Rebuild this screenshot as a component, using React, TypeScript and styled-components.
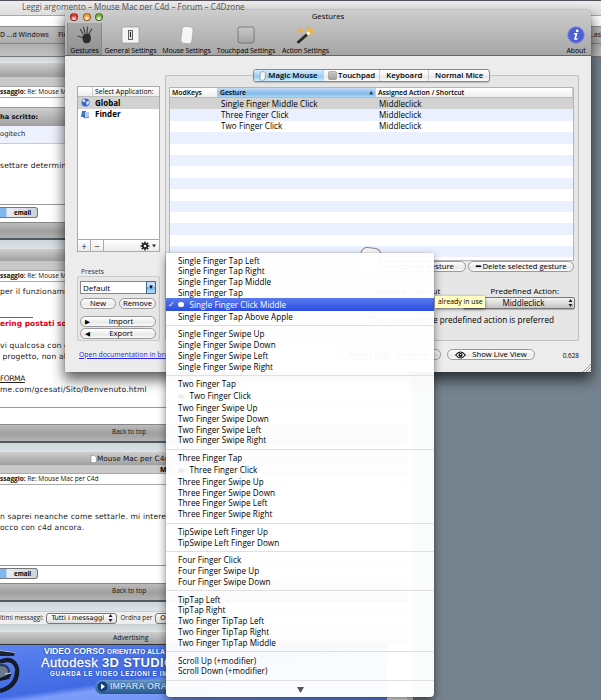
import React from "react";
import styled, { createGlobalStyle, css } from "styled-components";

const Global = createGlobalStyle`
  html, body { margin: 0; padding: 0; overflow: hidden; }
  * { box-sizing: border-box; }
  body { font-family: "Open Sans", "Noto Sans", sans-serif; color: #000; }
`;

const verdana = css`font-family: "DejaVu Sans", sans-serif;`;

const Desktop = styled.div`
  position: relative; width: 601px; height: 700px; overflow: hidden; background: #75838e;
  white-space: nowrap; font-size: 8px; line-height: 1;
`;

/* ---------- browser behind ---------- */
const Browser = styled.div`display: flex; flex-direction: column; width: 601px;`;
const BrowserTitle = styled.div`
  height: 16px; padding: 2px 0 0 22px; border-top: 1px solid #555059; border-bottom: 1px solid #a8a8a8;
  background: linear-gradient(#ededed, #dedede); color: #555; font-size: 8.15px;
`;
const AddressBar = styled.div`height: 11px; background: #fff; border-bottom: 1px solid #8b8b8b;`;
const Bookmarks = styled.div`
  display: flex; align-items: center; height: 17px; border-bottom: 1px solid #858585;
  background: linear-gradient(#bdbdbd, #adadad); color: #333; font-size: 6.9px; font-weight: 600;
  span:nth-child(2) { margin-left: 9px; }
  span:last-child { margin-left: auto; }
`;
const TabStrip = styled.div`height: 13px; background: linear-gradient(#b0b0b0, #c2c2c2); border-bottom: 1px solid #777;`;
const Page = styled.div`
  display: flex; flex-direction: column; width: 413px; background: #fff;
  border-right: 6px solid #e2e2e2;
`;
const Band = styled.div<{ $h: number }>`height: ${p => p.$h}px; background: linear-gradient(#ccd5da, #dde3e6);`;
const Bar = styled.div<{ $h: number; $pad?: number; $bold?: boolean }>`
  display: flex; align-items: center; height: ${p => p.$h}px; padding-left: ${p => p.$pad ?? 0}px;
  background: linear-gradient(#cecece, #a0a0a0); color: #111; font-size: 6.8px;
  ${p => p.$bold && css`${verdana} font-weight: 700; font-size: 6.6px;`}
`;
const TopicBar = styled(Bar)`
  ${verdana} font-size: 7.3px;
`;
const TopBar = styled(Bar)`
  font-size: 6.5px; padding: 0 0 1px 112px; background: linear-gradient(#bbb, #a0a0a0 55%, #b2b2b2);
  border-top: 1px solid #888; border-bottom: 2px solid #51595e;
`;
const Thin = styled.div<{ $h: number }>`
  height: ${p => p.$h}px; background: #c9c9c9; border-bottom: 1px solid #aaa; padding: 1px 0 0 160px;
  font-size: 7px; font-weight: 700;
`;
const Subject = styled.div`
  height: 11px; border-bottom: 1px solid #aaa; font-size: 6.5px; padding-top: 2px; color: #111;
`;
const Quote = styled.div`height: 18px; padding-top: 5px; background: #eef2ff; border-bottom: 1px solid #c5cbd9; ${verdana} font-size: 6.8px; color: #222;`;
const Post = styled.div<{ $h: number; $top: number }>`
  height: ${p => p.$h}px; padding-top: ${p => p.$top}px; border-bottom: 1px solid #999;
  ${verdana} font-size: 7.6px; line-height: 10.9px; color: #222; letter-spacing: 0.17px;
`;
const Warning = styled.div`margin: 0 0 11px; color: #e00016; font-weight: 700; font-size: 7.5px; letter-spacing: 0;`;
const Rule = styled.div`width: 33px; border-top: 1px solid #666; margin: 19px 0 1px;`;
const Under = styled.div`margin-top: 11px; text-decoration: underline; letter-spacing: -0.5px;`;
const MailRow = styled.div<{ $h: number }>`display: flex; align-items: flex-start; height: ${p => p.$h}px; padding-top: 2px; background: #fff;`;
const MailButton = styled.div`
  display: flex; align-items: center; width: 38px; height: 11px; padding-left: 14px; border: 1px solid #777; border-left: 0;
  border-radius: 0 3px 3px 0; background: linear-gradient(90deg, #80b8ee 0 6px, #e7edf2 7px, #ccd3d9);
  font: 700 6.2px "Open Sans", sans-serif;
`;
const Filters = styled.div`
  display: flex; align-items: center; height: 14px; background: #eee; border-block: 1px solid #ccc; font-size: 6.3px; color: #222;
`;
const FormSelect = styled.span`
  display: flex; align-items: center; justify-content: space-between; flex: none; width: 71px; height: 11px; margin: 0 3px; padding: 0 3px 0 4px;
  border: 1px solid #777; border-radius: 3px; background: linear-gradient(#fff, #ddd); ${verdana} font-size: 6.7px; color: #000;
`;
const Banner = styled.div`
  display: flex; width: 387px; height: 56px; background: linear-gradient(172deg, #5b83f0, #426ae4 48%, #7d9dfa 54%, #6389f6);
  border-top: 1px solid #333;
  > svg { flex: none; }
`;
const BannerText = styled.div`
  display: flex; flex-direction: column; color: #fff; font-family: "Liberation Sans", sans-serif; font-weight: 700;
  text-shadow: 0 0 2px #16347c;
`;
const B1 = styled.div`margin: 2px 0 0 3px; font-size: 8.6px; small { font-size: 6.4px; letter-spacing: .2px; }`;
const B2 = styled.div`font-size: 13px; line-height: 13px; letter-spacing: .35px; span { font-weight: 400; -webkit-text-stroke: .3px #fff; }`;
const B3 = styled.div`margin: 2px 0 0 9px; font-size: 6.3px; letter-spacing: 0.65px;`;
const B4 = styled.div`
  display: flex; align-items: center; gap: 2px; width: 110px; height: 14px; margin: 3px 0 0 54px; padding-left: 2px; border-radius: 7px;
  background: linear-gradient(#6b9bc9, #285889); font-size: 9px; color: #bcd9f5;
`;

/* ---------- preferences window ---------- */
const Win = styled.div`
  position: absolute; left: 65px; top: 10px; width: 526px; height: 362px; border-radius: 4px 4px 0 0;
  background: #ececec; box-shadow: 0 7px 13px 1px rgba(0,0,0,.62), 0 0 1px rgba(0,0,0,.6);
`;
const Head = styled.div`
  height: 46px; border-radius: 4px 4px 0 0; border-bottom: 1px solid #666; background: linear-gradient(#cdcdcd, #a6a6a6);
`;
const TitleRow = styled.div`display: grid; grid-template-columns: 60px 1fr 60px; height: 13px; align-items: center; text-align: center; font-size: 7.8px;`;
const Lights = styled.div`display: flex; gap: 4.6px; padding-left: 5px;`;
const Light = styled.i<{ $c: string }>`
  width: 8px; height: 8px; border-radius: 50%; border: 1px solid rgba(60,20,20,.55);
  background: radial-gradient(circle at 50% 85%, #fff, ${p => p.$c} 60%);
`;
const Tools = styled.div`display: flex; height: 32px; padding: 0 4px 0 2px;`;
const Tool = styled.div<{ $w: number; $on?: boolean }>`
  display: flex; flex-direction: column; align-items: center; justify-content: space-between; width: ${p => p.$w}px; padding: 3px 0 1.5px;
  font-size: 7px; letter-spacing: -0.1px;
  ${p => p.$on && css`background: rgba(0,0,0,.13); border-inline: 1px solid #888;`}
  &:last-child { margin-left: auto; }
  svg { display: block; }
`;
const Body = styled.div`display: flex; align-items: flex-start; height: 285px; gap: 5px; padding: 19px 12px 0;`;
const Side = styled.div`display: flex; flex-direction: column; width: 83px; padding-top: 11px;`;
const AppList = styled.div`display: flex; flex-direction: column; height: 166px; border: 1px solid #aaa; background: #fff;`;
const ListHead = styled.div`
  display: flex; height: 10px; border-bottom: 1px solid #bbb; font-size: 6.9px; line-height: 9px; background: linear-gradient(#fff,#eee);
  span { margin-left: 14px; padding-left: 2px; border-left: 1px solid #ccc; }
`;
const AppRow = styled.div<{ $on?: boolean }>`
  display: flex; align-items: center; gap: 5px; height: 11.6px; padding-left: 3px; font-size: 8px; font-weight: 700;
  background: ${p => (p.$on ? "#d2d2d2" : "#fff")};
`;
const ListFoot = styled.div`
  display: flex; margin-top: auto; height: 12px; border-top: 1px solid #aaa; background: linear-gradient(#fff, #ececec);
  span { display: flex; align-items: center; justify-content: center; width: 13px; border-right: 1px solid #aaa; font-size: 10px; color: #333; }
  svg { margin: 1px 2px 0 auto; }
`;
const Caption = styled.div`margin: 16px 0 0 4px; height: 7px; font-size: 6.7px; line-height: 7px; color: #333;`;
const Box = styled.div`
  display: flex; flex-wrap: wrap; gap: 0 3px; align-content: flex-start; margin-top: 1px; height: 65px; padding: 4px 3px 0 2px; border: 1px solid #cacaca; border-radius: 2px; background: #e6e6e6;
`;
const Combo = styled.div`
  display: flex; justify-content: space-between; width: 76px; height: 13px; border: 1px solid #888; background: #fff; padding-left: 2px; font-size: 8px; line-height: 12px;
  i { width: 10px; margin: -1px; border: 1px solid #3d6792; border-radius: 0 2px 2px 0; background: linear-gradient(#c6e1f9 45%, #6daee8 50%, #bbe4ff); text-align: center; font: 7px/11px "DejaVu Sans"; }
`;
const Pill = styled.div<{ $w: number; $mt?: number }>`
  display: flex; align-items: center; justify-content: center; gap: 2px; flex: none; width: ${p => p.$w}px; height: 11px; margin-top: ${p => p.$mt ?? 0}px;
  border: 1px solid #999; border-radius: 6px; background: linear-gradient(#fff, #eee 50%, #e5e5e5 52%, #fbfbfb); font-size: 7.7px;
`;
const ArrowPill = styled(Pill)`
  display: grid; grid-template-columns: 4px 1fr; padding: 0 4px; text-align: center; i { font: 6.5px "DejaVu Sans"; }
`;
const Link = styled.div`margin-top: 11px; padding-left: 2px; font-size: 6.9px; color: #2a26e0; text-decoration: underline;`;

const Main = styled.div`
  width: 414px; height: 266px; border: 1px solid #c0c0c0; border-radius: 2px; background: #e6e6e6;
`;
const Tabs = styled.div`
  display: flex; width: 237px; height: 13px; margin: -7px 0 0 87px; border: 1px solid #888; border-radius: 3px; overflow: hidden;
  background: linear-gradient(#fff, #f2f2f2 50%, #e6e6e6 52%, #fafafa); font-size: 7.8px; font-weight: 600; box-shadow: 0 1px 1px #bbb;
`;
const Tab = styled.div<{ $w: number; $on?: boolean }>`
  display: flex; align-items: center; justify-content: center; gap: 1px; width: ${p => p.$w}px;
  & + & { border-left: 1px solid #ccc; }
  ${p => p.$on && css`background: linear-gradient(#d7ecfc, #a3cff3 50%, #8bc1ee 52%, #cdeeff);`}
`;
const Table = styled.div`display: flex; flex-direction: column; width: 405px; height: 174px; margin: 5px 0 0 3px; overflow: hidden; border: 1px solid #b4b4b4; background: #fff;`;
const Row = styled.div<{ $bg: string }>`
  display: grid; grid-template-columns: 48px 158px 1fr; align-items: center; flex: none; height: 11.4px; background: ${p => p.$bg}; font-size: 8.1px; letter-spacing: .05px;
  span { padding-left: 3px; }
`;
const HeadRow = styled(Row)`
  height: 10px; border-bottom: 1px solid #bbb; font-size: 6.8px; font-weight: 600; letter-spacing: 0;
  span { padding-left: 2px; border-right: 1px solid #ccc; line-height: 9px; }
`;
const SortHead = styled.span`
  display: flex; justify-content: space-between; background: linear-gradient(#c5ddf5, #8fbfec 50%, #7db4e8 52%, #a9d6f6);
  i { font: 5px/9px "DejaVu Sans"; color: #246; padding-right: 2px; }
`;
const Actions = styled.div`display: flex; justify-content: flex-end; gap: 2px; margin: 0 4px 0 0;`;
const FieldLabels = styled.div`display: flex; justify-content: flex-end; gap: 50px; margin: 14px 19px 0 0; font-size: 8px; line-height: 9px;`;
const PopUp = styled.div`
  display: flex; align-items: center; justify-content: center; width: 112px; height: 12px; margin: 2px 3px 0 auto; padding-left: 14px; border: 1px solid #777; border-radius: 2px;
  background: linear-gradient(#f4f4f4, #c4c4c4); font-size: 8.1px; box-shadow: 0 1px 1px #aaa;
  span { width: 88px; text-align: center; }
`;
const Hint = styled.div`margin: 7px 24px 0 0; text-align: right; font-size: 8.2px;`;
const Bottom = styled.div`
  display: flex; width: 244px; height: 17px; gap: 6px; align-items: center; margin: 5px 0 0 270px;
  span { margin: 4px 0 0 auto; font-size: 6.4px; }
`;
const Ghost = styled.svg`position: absolute; left: 292px; top: 235px;`;
const Grip = styled.svg`position: absolute; right: 0; bottom: 0;`;

/* ---------- pop-up menu ---------- */
const Menu = styled.div`
  position: absolute; left: 166px; top: 253px; width: 268px; height: 444px; padding-top: 2.2px; border-radius: 1px 1px 4px 4px;
  background: rgba(255,255,255,.965); box-shadow: 0 4px 9px rgba(0,0,0,.5), 0 0 1px rgba(0,0,0,.4); font-size: 8.15px;
`;
const Item = styled.div<{ $dot?: boolean; $on?: boolean }>`
  display: flex; align-items: center; height: ${p => (p.$dot ? 12.9 : 10.8)}px; padding-left: ${p => (p.$dot ? 2 : 12)}px; letter-spacing: .04px;
  ${p => p.$on && css`background: linear-gradient(#587af0, #2c4ddd); color: #fff;`}
`;
const Check = styled.span`width: 10px; font: 700 8px "DejaVu Sans";`;
const Dot = styled.i<{ $on?: boolean }>`width: 6px; height: 5px; margin-right: 5.5px; border-radius: 2.5px; background: ${p => (p.$on ? "#fff" : "#ededed")};`;
const Sep = styled.div`height: 6.9px; padding-top: 3px; &::before { content: ""; display: block; height: 1px; background: #e0e0e0; }`;
const More = styled.div`display: flex; justify-content: center; padding-top: 3px;`;
const Tip = styled.div`
  position: absolute; left: 435px; top: 296px; width: 50px; height: 12px; padding-left: 3px; background: #ffffc6; font-size: 6.9px; line-height: 11px; box-shadow: 0 1px 3px rgba(0,0,0,.6);
`;

const groups: string[][] = [
  ["Single Finger Tap Left", "Single Finger Tap Right", "Single Finger Tap Middle", "Single Finger Tap", "*Single Finger Click Middle", "Single Finger Tap Above Apple"],
  ["Single Finger Swipe Up", "Single Finger Swipe Down", "Single Finger Swipe Left", "Single Finger Swipe Right"],
  ["Two Finger Tap", "*Two Finger Click", "Two Finger Swipe Up", "Two Finger Swipe Down", "Two Finger Swipe Left", "Two Finger Swipe Right"],
  ["Three Finger Tap", "*Three Finger Click", "Three Finger Swipe Up", "Three Finger Swipe Down", "Three Finger Swipe Left", "Three Finger Swipe Right"],
  ["TipSwipe Left Finger Up", "TipSwipe Left Finger Down"],
  ["Four Finger Click", "Four Finger Swipe Up", "Four Finger Swipe Down"],
  ["TipTap Left", "TipTap Right", "Two Finger TipTap Left", "Two Finger TipTap Right", "Two Finger TipTap Middle"],
  ["Scroll Up (+modifier)", "Scroll Down (+modifier)"],
];
const gestures = ["Single Finger Middle Click", "Three Finger Click", "Two Finger Click"];

const UpDown = () => (
  <svg width="5" height="8" viewBox="0 0 5 8"><path d="M2.5 0 4.5 3h-4zM2.5 8 4.5 5h-4z" fill="#222" /></svg>
);
const Hand = () => (
  <svg width="20" height="18" viewBox="0 0 20 18">
    <g stroke="#444" strokeWidth="1.200" strokeLinecap="round"><path d="M8 8 5.500 3.500M10 7 8.600 1.400M12 7l.6-6M14 8l2.700-5M7 11.500 3 10" /></g>
    <path d="M7.500 10q3-3.500 7-2 2.500 3 .5 8-4 2.500-6.500 0-1.500-3-1-6z" fill="#2b2b2b" />
  </svg>
);
const Switch = () => (
  <svg width="19" height="18" viewBox="0 0 19 18">
    <rect x="1" y="1" width="17" height="16" rx="1" fill="#f5f5f5" stroke="#999" strokeWidth=".7" />
    <rect x="7.500" y="4.500" width="4" height="9" fill="#ddd" stroke="#555" strokeWidth=".9" /><path d="M9.500 6v5" stroke="#222" />
  </svg>
);
const MouseIcon = () => (
  <svg width="16" height="18" viewBox="0 0 16 18"><rect x="2.500" y="0.500" width="11" height="17" rx="3" transform="rotate(7 8 9)" fill="#f6f6f6" stroke="#999" strokeWidth=".6" /></svg>
);
const MouseIconSmall = () => (
  <svg width="8" height="10" viewBox="0 0 8 10"><rect x="1.200" y=".8" width="5" height="8.400" rx="1.500" transform="rotate(7 4 5)" fill="#f8f8f8" stroke="#888" strokeWidth=".6" /></svg>
);
const Pad = ({ s = 18 }: { s?: number }) => (
  <svg width={s} height={s} viewBox="0 0 18 18"><defs><linearGradient id="pad" x2="0" y2="1"><stop stopColor="#c9c9c9" /><stop offset="1" stopColor="#a3a3a3" /></linearGradient></defs><rect x="1" y="1" width="16" height="16" rx="2" fill="url(#pad)" stroke="#6b6b6b" strokeWidth=".8" /></svg>
);
const Wand = () => (
  <svg width="20" height="18" viewBox="0 0 20 18">
    <path d="m13 0 1.500 3 4-.5-2.500 3 2.300 3.500-3.800-1-2.500 3-.5-4-4-1.500 4-1.500zM4 1l1 2 2 .3L5.500 5 6 7 4 6 2 7l.4-2L1 3.500 3 3z" fill="#f3b33b" />
    <path d="M2.500 16 11 8.500" stroke="#292929" strokeWidth="3" strokeLinecap="round" /><path d="m11 8.500 2.500-2.200" stroke="#fff" strokeWidth="2.600" />
  </svg>
);
const Info = () => (
  <svg width="18" height="18" viewBox="0 0 18 18"><circle cx="9" cy="9" r="8.300" fill="#4e60d4" stroke="#8592dd" strokeWidth=".7" /><circle cx="10.200" cy="4.800" r="1.400" fill="#fff" /><path d="M7 7.800h2.500L8 13h2.500" fill="none" stroke="#fff" strokeWidth="1.600" /></svg>
);
const GearMenu = () => (
  <svg width="17" height="10" viewBox="0 0 17 10"><g stroke="#222" strokeWidth="1.500"><path d="M5 .5v9M.5 5h9M1.800 1.800l6.400 6.400M8.200 1.800 1.800 8.200" /></g><circle cx="5" cy="5" r="3" fill="#222" /><circle cx="5" cy="5" r="1.300" fill="#f4f4f4" /><path d="M12 3.500h4l-2 2.700z" fill="#222" /></svg>
);
const Globe = () => (
  <svg width="9" height="9" viewBox="0 0 9 9"><circle cx="4.500" cy="4.500" r="4" fill="#4166c4" /><path d="M1 3q2-3 3-1t-1 2zM5 4l3-1q0 4-2 4z" fill="#dce8ff" /></svg>
);
const FinderIcon = () => (
  <svg width="9" height="9" viewBox="0 0 9 9"><path d="M1 1h4v6H0z" fill="#3f79c8" /><path d="M4 2h4v5H4z" fill="#b8cdea" /><path d="M2 7q3 2 6 0" stroke="#345" fill="none" strokeWidth=".7" /></svg>
);
const Eye = () => (
  <svg width="11" height="8" viewBox="0 0 11 8"><path d="M.7 4Q5.500-2 10.300 4 5.500 10 .7 4z" fill="#fff" stroke="#111" strokeWidth="1.200" /><circle cx="5.500" cy="4" r="2.100" fill="#111" /><circle cx="5.500" cy="3.500" r=".7" fill="#fff" /></svg>
);
const Bike = () => (
  <svg width="41" height="54" viewBox="0 0 41 54">
    <path d="M0 5 15 7 14 11 0 11z" fill="#1a2233" /><path d="M0 5.500 15 7.500" stroke="#b9c3d6" strokeWidth="1" />
    <path d="M0 17Q14 11 17 24 18 41 0 46" fill="none" stroke="#141b2b" strokeWidth="4.500" />
    <path d="M1 19Q13 15 15 26" fill="none" stroke="#7e8ba5" strokeWidth=".8" />
    <circle cx="2" cy="27" r="7" fill="#6c7790" stroke="#273654" strokeWidth="2" /><path d="M0 33l12-5-3 6-9 2z" fill="#111827" /><path d="M5 29l6-1" stroke="#d6deed" />
  </svg>
);

export default function App() {
  return (
    <Desktop>
      <Global />
      <Browser>
        <BrowserTitle>Leggi argomento – Mouse Mac per C4d – Forum – C4Dzone</BrowserTitle>
        <AddressBar />
        <Bookmarks><span>D ...d Windows</span><span>Fin</span><span>...as</span></Bookmarks>
        <TabStrip />
        <Page>
          <Band $h={6} />
          <Bar $h={14} />
          <Thin $h={10} />
          <Subject><b>ssaggio:</b> Re: Mouse Mac per C4d</Subject>
          <Post $h={10} $top={0} />
          <Bar $h={18} $bold>ha scritto:</Bar>
          <Quote>ogitech</Quote>
          <Post $h={61} $top={17}>settare determinate</Post>
          <MailRow $h={17}><MailButton>email</MailButton></MailRow>
          <TopBar $h={18} />
          <Band $h={9} />
          <Bar $h={12} />
          <Thin $h={10} />
          <Subject><b>ssaggio:</b> Re: Mouse Mac per C4d</Subject>
          <Post $h={126} $top={5}>
            <div>per il funzionamento</div>
            <Rule />
            <Warning>ering postati sono</Warning>
            <div>vi qualcosa con c4d</div>
            <div>&nbsp;progetto, non altro</div>
            <Under>FORMA</Under>
            <div>me.com/gcesati/Sito/Benvenuto.html</div>
          </Post>
          <MailRow $h={16} />
          <TopBar $h={19}>Back to top</TopBar>
          <Band $h={9} />
          <TopicBar $h={13} $pad={90}>
            <svg width="7" height="8" viewBox="0 0 7 8"><path d="M1 .5h3.500L6.300 2.500v5H1z" fill="#fff" stroke="#888" strokeWidth=".6" /></svg>
            Mouse Mac per C4d
          </TopicBar>
          <Thin $h={9}>Me</Thin>
          <Subject><b>ssaggio:</b> Re: Mouse Mac per C4d</Subject>
          <Post $h={81} $top={27}>
            <div>n saprei neanche come settarle. mi interessa</div>
            <div>occo con c4d ancora.</div>
          </Post>
          <MailRow $h={17}><MailButton>email</MailButton></MailRow>
          <TopBar $h={19}>Back to top</TopBar>
          <Band $h={9} />
          <Filters>ltimi messaggi:<FormSelect>Tutti i messaggi<UpDown /></FormSelect>Ordina per<FormSelect>Ora</FormSelect></Filters>
          <Band $h={7} />
          <Bar $h={12} $pad={113}>Advertising</Bar>
          <Banner>
            <Bike />
            <BannerText>
              <B1>VIDEO CORSO <small>ORIENTATO ALLA</small></B1>
              <B2><span>Autodesk</span> 3D STUDIO V-RAY</B2>
              <B3>GUARDA LE VIDEO LEZIONI E IMPARA</B3>
              <B4><svg width="11" height="11" viewBox="0 0 11 11"><circle cx="5.500" cy="5.500" r="5" fill="#123c7b" /><path d="M4 2.500 8 5.500 4 8.500z" fill="#fff" /></svg>IMPARA ORA</B4>
            </BannerText>
          </Banner>
        </Page>
      </Browser>

      <Win>
        <Head>
          <TitleRow>
            <Lights><Light $c="#e3382f" /><Light $c="#efa332" /><Light $c="#6cb53c" /></Lights>
            <span>Gestures</span><span />
          </TitleRow>
          <Tools>
            <Tool $w={35} $on><Hand />Gestures</Tool>
            <Tool $w={57}><Switch />General Settings</Tool>
            <Tool $w={55}><MouseIcon />Mouse Settings</Tool>
            <Tool $w={64}><Pad />Touchpad Settings</Tool>
            <Tool $w={55}><Wand />Action Settings</Tool>
            <Tool $w={22}><Info />About</Tool>
          </Tools>
        </Head>
        <Body>
          <Side>
            <AppList>
              <ListHead><span>Select Application:</span></ListHead>
              <AppRow $on><Globe />Global</AppRow>
              <AppRow><FinderIcon />Finder</AppRow>
              <ListFoot><span>+</span><span>−</span><GearMenu /></ListFoot>
            </AppList>
            <Caption>Presets</Caption>
            <Box>
              <Combo>Default<i>▾</i></Combo>
              <Pill $w={36} $mt={4}>New</Pill><Pill $w={37} $mt={4}>Remove</Pill>
              <ArrowPill $w={76} $mt={7}><i>▶</i>Import</ArrowPill>
              <ArrowPill $w={76} $mt={1}><i>◀</i>Export</ArrowPill>
            </Box>
            <Link>Open documentation in browser</Link>
          </Side>
          <Main>
            <Tabs>
              <Tab $w={69} $on><MouseIconSmall />Magic Mouse</Tab>
              <Tab $w={57}><Pad s={9} />Touchpad</Tab>
              <Tab $w={49}>Keyboard</Tab>
              <Tab $w={61}>Normal Mice</Tab>
            </Tabs>
            <Table>
              <HeadRow $bg="linear-gradient(#fff,#eee)"><span>ModKeys</span><SortHead>Gesture<i>▲</i></SortHead><span>Assigned Action / Shortcut</span></HeadRow>
              {Array.from({ length: 15 }, (_, i) => (
                <Row key={i} $bg={i === 0 ? "#d2d2d2" : i % 2 ? "#eaf0fe" : "#fff"}>
                  <span /><span>{gestures[i]}</span><span>{gestures[i] && "Middleclick"}</span>
                </Row>
              ))}
            </Table>
            <Actions><Pill $w={91}><b>+</b> Add new gesture</Pill><Pill $w={106}><b>━</b> Delete selected gesture</Pill></Actions>
            <FieldLabels><span>Assigned Shortcut</span><span>Predefined Action:</span></FieldLabels>
            <PopUp><span>Middleclick</span><UpDown /></PopUp>
            <Hint>If you set both the predefined action is preferred</Hint>
          </Main>
        </Body>
        <Bottom><Pill $w={106}>Report bug / feedback</Pill><Pill $w={88}><Eye />&nbsp;&nbsp;Show Live View</Pill><span>0.628</span></Bottom>
        <Ghost width="26" height="34" viewBox="0 0 26 34"><rect x="3" y="3" width="20" height="29" rx="6" transform="rotate(7 13 17)" fill="#f8f8f8" stroke="#888" /></Ghost>
        <Grip width="8" height="8" viewBox="0 0 8 8"><path d="M0 8 8 0M3 8l5-5M6 8l2-2" stroke="#888" strokeWidth=".8" /></Grip>
      </Win>

      <Menu>
        {groups.map((g, gi) => (
          <React.Fragment key={gi}>
            {g.map(t => {
              const dot = t[0] === "*";
              const on = dot && gi === 0;
              return (
                <Item key={t} $dot={dot} $on={on}>
                  {dot && <><Check>{on ? "✓" : ""}</Check><Dot $on={on} /></>}
                  {dot ? t.slice(1) : t}
                </Item>
              );
            })}
            <Sep />
          </React.Fragment>
        ))}
        <More><svg width="7" height="6" viewBox="0 0 7 6"><path d="M0 0h7L3.500 6z" fill="#555" /></svg></More>
      </Menu>
      <Tip>already in use</Tip>
    </Desktop>
  );
}
